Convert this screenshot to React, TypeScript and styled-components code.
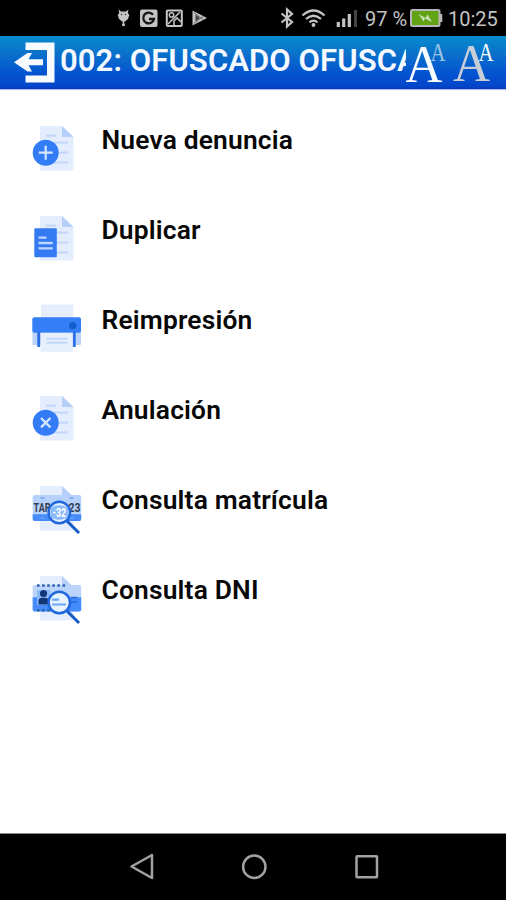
import React from "react";
import styled, { createGlobalStyle } from "styled-components";

const Global = createGlobalStyle`
  * { box-sizing: border-box; }
  body { margin: 0; background: #fff; font-family: Roboto, "Liberation Sans", sans-serif; }
`;

const Screen = styled.div`
  width: 506px;
  height: 900px;
  display: flex;
  flex-direction: column;
  background: #fff;
  overflow: hidden;
`;

const StatusBar = styled.div`
  height: 36px;
  flex: none;
  background: #000;
  display: flex;
  align-items: center;
  justify-content: space-between;
  padding: 0 8px 0 115px;
  color: #c4c4c4;
`;

const StatusGroup = styled.div`
  display: flex;
  align-items: center;
`;

const StatusText = styled.span<{ $left: number; $width: number }>`
  font-size: 20px;
  line-height: 36px;
  padding-top: 2px;
  margin-left: ${(p) => p.$left}px;
  width: ${(p) => p.$width}px;
  white-space: nowrap;
`;

const Icon = styled.svg`
  display: block;
  flex: none;
`;

const Header = styled.header`
  height: 53px;
  flex: none;
  display: flex;
  align-items: flex-start;
  background: linear-gradient(#058ccd 0%, #0a6fcb 35%, #0454d0 70%, #0345ca 96%, #0a35b4 100%);
  box-shadow: 0 1px 1px #b9bff0;
`;

const Title = styled.h1`
  margin: 0 0 0 4px;
  width: 346px;
  height: 50px;
  font-size: 31px;
  line-height: 49px;
  letter-spacing: 0.1px;
  font-weight: 600;
  color: #f4f9ff;
  white-space: nowrap;
  overflow: hidden;
`;

const Menu = styled.nav`
  flex: 1;
  padding-top: 31px;
`;

const Item = styled.div`
  height: 90px;
  display: flex;
  align-items: flex-start;
  padding-left: 28px;
`;

const Label = styled.span`
  margin-left: 13.5px;
  font-size: 26.4px;
  line-height: 40px;
  letter-spacing: 0.17px;
  font-weight: 600;
  color: #080808;
  white-space: nowrap;
`;

const NavBar = styled.footer`
  height: 67px;
  flex: none;
  background: #000;
  border-top: 1px solid #888;
  display: flex;
  align-items: center;
  padding-left: 128px;
  gap: 84px;
`;

const Sheet = () => (
  <>
    <path d="M12 6H34L45.500 17V50.500H12Z" fill="#e4edfe" />
    <path d="M34 6L45.500 17H34Z" fill="#b5cffa" />
  </>
);

const SheetLines = () => (
  <path d="M18 15.700H28M25 22.700H40M25 32.700H40M25 42.500H40" stroke="#c3d7fa" strokeWidth="2.200" />
);

const Lens = () => (
  <>
    <path d="M39 41L51 53" stroke="#145acb" strokeWidth="3" />
    <circle cx="31.300" cy="32.500" r="10.700" fill="#e7f2ff" stroke="#2068dc" strokeWidth="2.500" />
  </>
);

const NewIcon = () => (
  <>
    <Sheet />
    <SheetLines />
    <circle cx="17.700" cy="32.700" r="13" fill="#347cf5" />
    <path d="M17.700 25.700V39.700M10.700 32.700H24.700" stroke="#d4e5ff" strokeWidth="2.200" />
  </>
);

const DuplicateIcon = () => (
  <>
    <Sheet />
    <SheetLines />
    <rect x="6.300" y="18.300" width="22.500" height="29" rx="1" fill="#347af2" />
    <path d="M10.500 27.700H18.500M10.500 33H24.700M10.500 38.300H24.700" stroke="#bcd6ff" strokeWidth="2.300" />
  </>
);

const PrinterIcon = () => (
  <>
    <rect x="13" y="4.500" width="32.300" height="16" fill="#e5edfd" />
    <rect x="4.500" y="30" width="48.500" height="15" rx="1" fill="#b9d3fb" />
    <rect x="4.300" y="17.300" width="48.700" height="15.500" rx="2" fill="#347ef7" />
    <rect x="12.700" y="32.800" width="32.500" height="19" fill="#e7effd" />
    <path d="M10.700 32V47M46.300 32V47" stroke="#2c6ee5" strokeWidth="2.800" />
    <path d="M18.700 38.700H39.700M18.700 42.700H39.700" stroke="#c2d8fb" strokeWidth="2" />
    <circle cx="44.700" cy="25.700" r="3.600" fill="#155bcd" />
  </>
);

const CancelIcon = () => (
  <>
    <Sheet />
    <SheetLines />
    <circle cx="17.700" cy="32.700" r="13" fill="#347cf5" />
    <path d="M13 28L22.400 37.400M22.400 28L13 37.400" stroke="#d4e5ff" strokeWidth="2.300" />
  </>
);

const PlateText = styled.text`
  font-family: Roboto, sans-serif;
  font-weight: 700;
`;

const PlateIcon = () => (
  <>
    <Sheet />
    <rect x="4.700" y="15" width="48.500" height="26" rx="2" fill="#b6d1fb" />
    <path d="M4.700 34.300H53.200V39A2 2 0 0 1 51.200 41H6.700A2 2 0 0 1 4.700 39Z" fill="#468bfa" />
    <path d="M12.500 18H16.500M41.500 18H45.500M12.500 38H16.500M41.500 38H45.500" stroke="#71a3f4" strokeWidth="1.500" />
    <PlateText x="5.500" y="32" fontSize="13" textLength="17" lengthAdjust="spacingAndGlyphs" fill="#343d4e">TAR</PlateText>
    <PlateText x="40.500" y="32" fontSize="13" textLength="12" lengthAdjust="spacingAndGlyphs" fill="#343d4e">23</PlateText>
    <Lens />
    <path d="M22.500 28Q31 22 40 28V37Q31 43 22.500 37Z" fill="#8dbafb" />
    <PlateText x="24.500" y="37" fontSize="13" textLength="13.500" lengthAdjust="spacingAndGlyphs" fill="#fff">-32</PlateText>
  </>
);

const DniIcon = () => (
  <>
    <Sheet />
    <rect x="4.700" y="15" width="48.500" height="26.500" rx="2" fill="#bad4fc" />
    <path d="M4.700 27.300H53.200V39.500A2 2 0 0 1 51.200 41.500H6.700A2 2 0 0 1 4.700 39.500Z" fill="#468bfa" />
    <path d="M9 15.500H38M9 40.300H25" stroke="#3264ac" strokeWidth="2.600" strokeDasharray="2.600 2.500" />
    <path d="M43 27.500H49M43 32H49" stroke="#256cda" strokeWidth="1.500" />
    <rect x="9" y="20" width="13" height="15" fill="#8dbafb" />
    <circle cx="15.500" cy="23.500" r="3.600" fill="#133776" />
    <path d="M10.500 34.500V30Q11 28 13.500 27.700H17.500Q20 28 20.500 30V34.500Z" fill="#133776" />
    <Lens />
    <path d="M24 29.700H31M24 34.500H38" stroke="#6da7fb" strokeWidth="2.200" />
  </>
);

const items: { label: string; Art: () => React.ReactElement }[] = [
  { label: "Nueva denuncia", Art: NewIcon },
  { label: "Duplicar", Art: DuplicateIcon },
  { label: "Reimpresión", Art: PrinterIcon },
  { label: "Anulación", Art: CancelIcon },
  { label: "Consulta matrícula", Art: PlateIcon },
  { label: "Consulta DNI", Art: DniIcon },
];

const NotificationIcons = () => (
  <Icon width="96" height="36" viewBox="115 0 96 36">
    <g fill="#c4c4c4">
      <path d="M118.500 9.500L121 11.500H126L128.500 9.500L127.800 13L129.300 15L128 19L125 21.500H122L119 19L117.700 15L119.200 13Z" />
      <path d="M123.500 21V25" stroke="#c4c4c4" strokeWidth="1.500" />
      <circle cx="123.500" cy="24.800" r="1.500" />
      <rect x="140" y="9.500" width="17.500" height="17.500" rx="2" />
    </g>
    <circle cx="121.500" cy="14.500" r=".7" fill="#333" />
    <circle cx="125.500" cy="14.500" r=".7" fill="#333" />
    <path d="M153 14.700A5.400 5.400 0 1 0 154 19H149" fill="none" stroke="#161616" strokeWidth="2.300" />
    <rect x="166.800" y="10.500" width="15" height="15.500" rx="1" fill="none" stroke="#c4c4c4" strokeWidth="2" />
    <path d="M168 24L180 12M174 25V21L177 18L181 22" fill="none" stroke="#c4c4c4" strokeWidth="1.600" />
    <circle cx="171.500" cy="15" r="2.200" fill="none" stroke="#c4c4c4" strokeWidth="1.500" />
    <path d="M192.500 10.500L207 18L192.500 25.500Z" fill="#c4c4c4" />
    <path d="M195.500 14.500V21.500L200 18Z" fill="#444" />
    <path d="M194 12.500L203.500 20M194 23.500L203.500 16" stroke="#555" strokeWidth=".8" />
  </Icon>
);

const SignalIcons = () => (
  <Icon width="80" height="36" viewBox="278 0 80 36">
    <path d="M281.500 13.500L292 22L287 26.500V9.500L292 14L281.500 22.500" fill="none" stroke="#c4c4c4" strokeWidth="2.200" />
    <path d="M302.500 15.500Q313.500 5.500 324.500 15.500M306 19Q313.500 12.500 321 19M309.500 22.300Q313.500 19 317.500 22.300" fill="none" stroke="#c4c4c4" strokeWidth="2.300" />
    <circle cx="313.500" cy="25" r="1.900" fill="#c4c4c4" />
    <path d="M338.300 27V22M343.700 27V18.500M349.300 27V14" stroke="#c4c4c4" strokeWidth="3.200" />
    <path d="M355.500 27V10" stroke="#444" strokeWidth="3" />
  </Icon>
);

const BatteryIcon = () => (
  <Icon width="34" height="36" viewBox="409 0 34 36">
    <rect x="411" y="10" width="28.500" height="16" rx="1.500" fill="#62a315" stroke="#b8b8b8" strokeWidth="2" />
    <path d="M441 14V22" stroke="#b8b8b8" strokeWidth="2.500" />
    <path d="M418.500 14L425.500 18L427.500 14.500L432 22L425 18.500L423.500 21.500Z" fill="#c9dfb6" />
  </Icon>
);

const ExitIcon = () => (
  <Icon width="56" height="53" viewBox="0 36 56 53">
    <path d="M25.500 42.500H54.500V82.500H25.500V75.500H47V50H25.500Z" fill="#f7fbff" />
    <path d="M14 62.200L27.500 53H32L28.500 59.200H43V65.300H28.500L32 71.500H27.500Z" fill="#f7fbff" />
  </Icon>
);

const Letter = styled.text`
  font-family: "Liberation Serif", serif;
`;

const FontSizeIcons = () => (
  <Icon width="100" height="53" viewBox="406 36 100 53">
    <Letter x="430.500" y="61" fontSize="25" textLength="15" lengthAdjust="spacingAndGlyphs" fill="#9dc3e5">A</Letter>
    <Letter x="405" y="82.300" fontSize="53" textLength="37.500" lengthAdjust="spacingAndGlyphs" fill="#f7fbff">A</Letter>
    <Letter x="453" y="81.300" fontSize="53" textLength="37" lengthAdjust="spacingAndGlyphs" fill="#c8ced7">A</Letter>
    <Letter x="478.500" y="61" fontSize="25" textLength="15" lengthAdjust="spacingAndGlyphs" fill="#f7fbff">A</Letter>
  </Icon>
);

const App = () => (
  <>
    <Global />
    <Screen>
      <StatusBar>
        <NotificationIcons />
        <StatusGroup>
          <SignalIcons />
          <StatusText $left={7} $width={44}>97 %</StatusText>
          <BatteryIcon />
          <StatusText $left={5} $width={50}>10:25</StatusText>
        </StatusGroup>
      </StatusBar>
      <Header>
        <ExitIcon />
        <Title>002: OFUSCADO OFUSCADO</Title>
        <FontSizeIcons />
      </Header>
      <Menu>
        {items.map(({ label, Art }) => (
          <Item key={label}>
            <Icon width="60" height="60" viewBox="0 0 60 60"><Art /></Icon>
            <Label>{label}</Label>
          </Item>
        ))}
      </Menu>
      <NavBar>
        <Icon width="28" height="30" viewBox="0 0 28 30"><path d="M3.500 14.500L24 3V26Z" fill="none" stroke="#a2a2a2" strokeWidth="2.500" strokeLinejoin="round" /></Icon>
        <Icon width="28" height="30" viewBox="0 0 28 30"><circle cx="14.300" cy="14.800" r="11.200" fill="none" stroke="#a2a2a2" strokeWidth="2.500" /></Icon>
        <Icon width="28" height="30" viewBox="0 0 28 30"><rect x="4.500" y="4.300" width="20.500" height="21" rx=".5" fill="none" stroke="#a2a2a2" strokeWidth="2.500" /></Icon>
      </NavBar>
    </Screen>
  </>
);

export default App;
